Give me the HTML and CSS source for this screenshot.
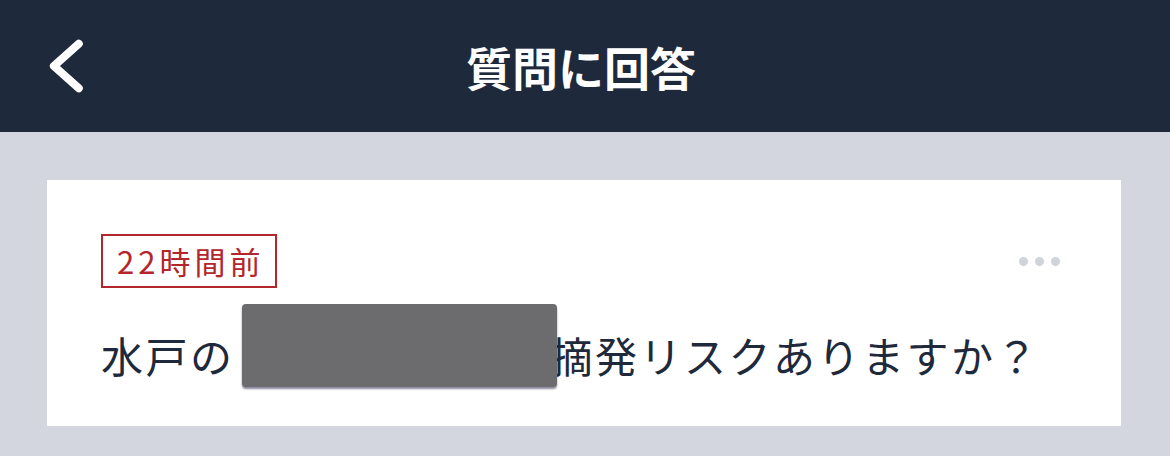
FILE: index.html
```html
<!DOCTYPE html>
<html lang="ja">
<head>
  <meta charset="UTF-8" />
  <meta name="viewport" content="width=device-width, initial-scale=1.0" />
  <title>質問に回答</title>
  <link rel="stylesheet" href="styles.css">
</head>
<body>
  <header class="topbar">
    <a class="back" href="#" aria-label="戻る">
      <svg width="40" height="70" viewBox="45 30 45 70">
        <polyline points="83,40 55,65 83,90" fill="none" stroke="#fff" stroke-width="9" stroke-linecap="round" stroke-linejoin="round" />
      </svg>
    </a>
    <h1 class="title">質問に回答</h1>
    <div></div>
  </header>

  <main class="content">
    <section class="card">
      <div class="card-head">
        <span class="badge">22時間前</span>
        <button class="more" aria-label="メニュー">
          <i></i><i></i><i></i>
        </button>
      </div>
      <p class="question">水戸の<span class="redacted"></span>摘発リスクありますか？</p>
    </section>
  </main>
</body>
</html>
```

FILE: styles.css
```css
body {
  margin: 0;
  background: #d3d6de;
  font-family: "Noto Sans CJK JP", "Noto Sans", sans-serif;
  color: #1e293b;
}

.topbar {
  height: 132px;
  background: #1e293b;
  display: grid;
  grid-template-columns: 1fr auto 1fr;
  align-items: center;
}

.back {
  display: flex;
  padding-left: 45px;
}

.title {
  margin: 0;
  color: #fff;
  font-size: 46px;
  font-weight: 700;
  line-height: 1;
  position: relative;
  left: -4px;
}

.content {
  padding: 48px 49px 30px 47px;
}

.card {
  background: #fff;
  padding: 54px 54px 41px 54px;
}

.card-head {
  display: flex;
  justify-content: space-between;
  align-items: center;
}

.badge {
  border: 2px solid #b3262b;
  color: #b3262b;
  font-size: 31px;
  line-height: 50px;
  letter-spacing: 4px;
  padding: 0 11px 0 14px;
}

.more {
  display: flex;
  gap: 7px;
  padding: 0;
  margin-right: 7px;
  border: 0;
  background: none;
}

.more i {
  width: 9px;
  height: 9px;
  border-radius: 50%;
  background: #d0d3da;
}

.question {
  margin: 37px 0 0;
  font-size: 42px;
  line-height: 60px;
  letter-spacing: 2.5px;
  white-space: nowrap;
}

.redacted {
  display: inline-block;
  vertical-align: top;
  width: 316px;
  height: 60px;
  position: relative;
}

.redacted::after {
  content: "";
  position: absolute;
  left: 7px;
  top: -21px;
  width: 315px;
  height: 83px;
  background: #6c6c6e;
  border-radius: 4px;
  box-shadow: 0 2px 2px rgba(40, 40, 75, 0.55);
}
```
